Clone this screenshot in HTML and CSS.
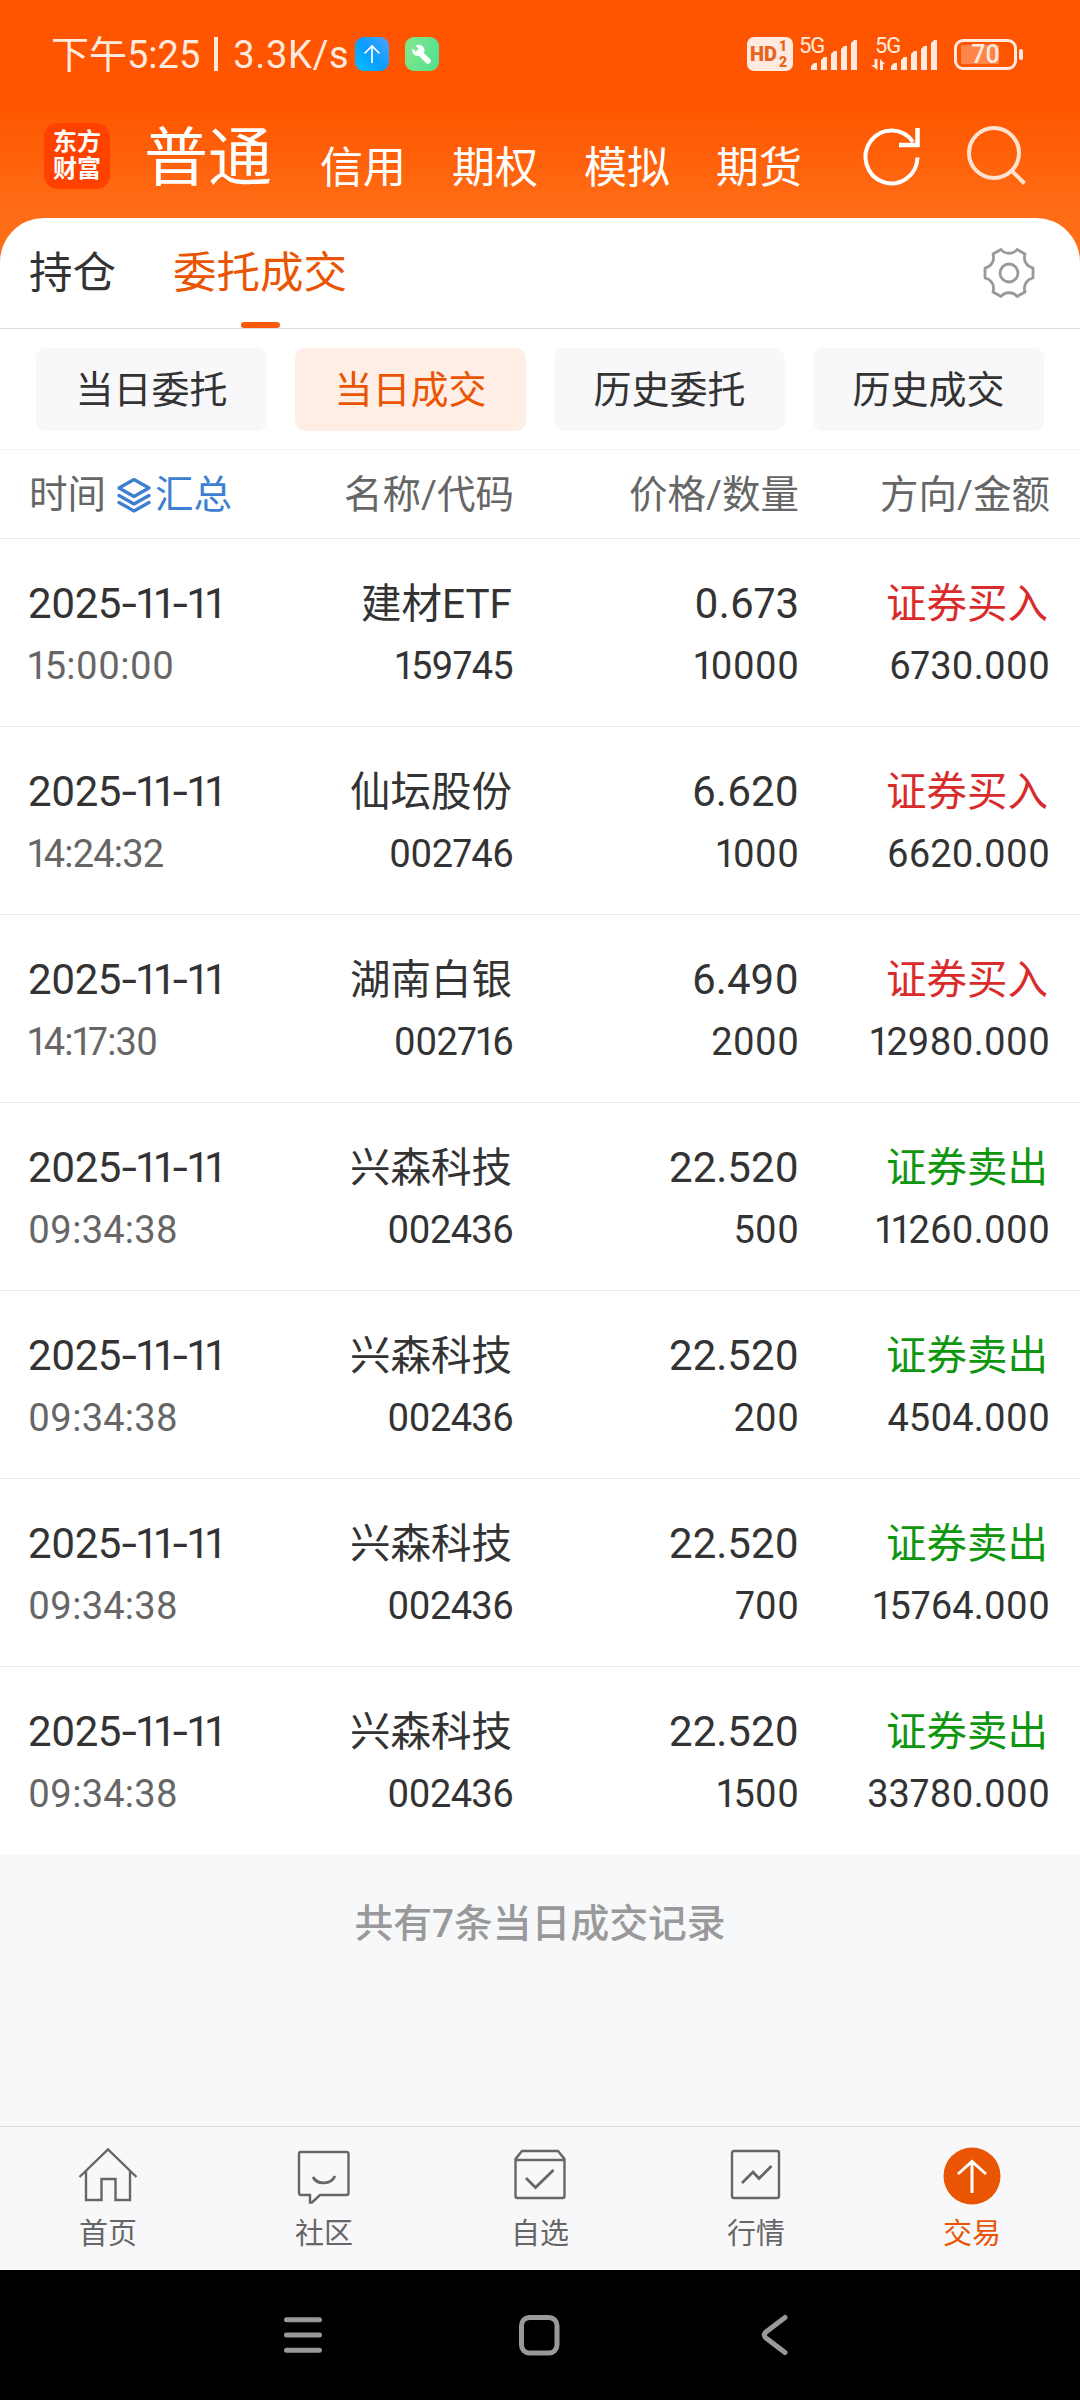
FILE: index.html
```
<!DOCTYPE html>
<html lang="zh-CN">
<head>
    <meta charset="UTF-8">
    <meta name="viewport" content="width=device-width, initial-scale=1.0">
    <title>当日成交</title>
    <link rel="stylesheet" href="styles.css">
</head>
<body>
    <div class="app">
        <div class="top">
            <div class="status-bar">
                <span class="status-time">下午5:25</span>
                <span class="status-divider"></span>
                <span class="status-speed">3.3K/s</span>
                <span class="status-app upload">
                    <svg width="34" height="34" viewBox="0 0 34 34"><path d="M17 26V9M9.500 16.500L17 9l7.500 7.500" fill="none" stroke="#fff" stroke-width="1.700"/></svg>
                </span>
                <span class="status-app tool">
                    <svg width="34" height="34" viewBox="0 0 34 34"><path d="M14 15L23 24" stroke="#fff" stroke-width="5.500" stroke-linecap="round"/><path d="M10.500 8.500l4 4-.500 2-2.500.500-4-3.500c-1.300 4 1.500 7.500 5.500 7.500 4.500 0 7.300-3.500 6.300-7-.800-3.500-5-5.500-8.800-3.500z" fill="#fff"/></svg>
                </span>
                <div class="status-right">
                    <span class="hd">HD<span class="hd-num"><i>1</i><i>2</i></span></span>
                    <span class="signal">
                        <span class="net">5G</span>
                        <svg width="64" height="34" viewBox="0 0 64 34" fill="#ffeadf"><path d="M15 33v-4l3-3h3v7zM25 33V23l3-3h3v13zM35 33V17l3-3h3v19zM45 33V12l3-3h3v24zM55 33V6l3-3h3v30z"/></svg>
                    </span>
                    <span class="signal second">
                        <span class="net">5G</span>
                        <svg width="68" height="34" viewBox="-4 0 68 34" fill="#ffeadf"><path d="M-5 28h3.500v-6h3v11zM4 33V22l5 5H7v6z"/><path d="M15 33v-4l3-3h3v7zM25 33V23l3-3h3v13zM35 33V17l3-3h3v19zM45 33V12l3-3h3v24zM55 33V6l3-3h3v30z"/></svg>
                    </span>
                    <span class="battery">70</span>
                    <span class="battery-cap"></span>
                </div>
            </div>

            <div class="header">
                <div class="logo">东方<br>财富</div>
                <a class="account active">普通</a>
                <a class="account">信用</a>
                <a class="account">期权</a>
                <a class="account">模拟</a>
                <a class="account">期货</a>
                <svg class="refresh" width="60" height="60" viewBox="0 0 60 60" fill="none" stroke="#fff" stroke-width="4"><path d="M55.500 31.500A26 26.500 0 1 1 51 16"/><path d="M55.500 2v17H37" stroke-width="4.500"/></svg>
                <svg class="search" width="60" height="60" viewBox="0 0 60 60" fill="none" stroke="#ffe2d0" stroke-width="4"><circle cx="27" cy="27" r="25"/><path d="M44 44l13.500 13.500"/></svg>
            </div>
        </div>

        <div class="card">
            <div class="tabs">
                <a class="tab">持仓</a>
                <a class="tab active">委托成交</a>
                <svg class="gear" width="52" height="52" viewBox="0 0 52 52" fill="none" stroke="#999" stroke-width="2.800" stroke-linejoin="round"><path d="M18 2.500C22 7.500 30 7.500 34 2.500L42 7C40 13.500 43.500 19.500 50 21V31C43.500 32.500 40 38.500 42 45L34 49.500C30 44.500 22 44.500 18 49.500L10 45C12 38.500 8.500 32.500 2 31V21C8.500 19.500 12 13.500 10 7Z"/><circle cx="26" cy="26" r="9"/></svg>
            </div>

            <div class="filters">
                <a class="filter">当日委托</a>
                <a class="filter active">当日成交</a>
                <a class="filter">历史委托</a>
                <a class="filter">历史成交</a>
            </div>

            <div class="table-head">
                <div class="head-time">时间
                    <span class="summary">
                        <svg width="34" height="36" viewBox="0 0 34 36" fill="none" stroke="#3d7fd0" stroke-width="3.200" stroke-linejoin="round" stroke-linecap="round"><path d="M17 2.500L32 11 17 19.500 2 11zM2 18.500l15 8.500 15-8.500M2 25.500L17 34l15-8.500"/></svg>汇总
                    </span>
                </div>
                <div>名称/代码</div>
                <div>价格/数量</div>
                <div>方向/金额</div>
            </div>

            <div class="row">
                <div class="date">2025<b>-</b>11<b>-</b>11</div><div class="name">建材ETF</div><div>0.673</div><div class="name buy">证券买入</div>
                <div class="sub time">15:00:00</div><div class="sub code">159745</div><div class="sub">10000</div><div class="sub">6730.000</div>
            </div>
            <div class="row">
                <div class="date">2025<b>-</b>11<b>-</b>11</div><div class="name">仙坛股份</div><div>6.620</div><div class="name buy">证券买入</div>
                <div class="sub time tight">14:24:32</div><div class="sub code">002746</div><div class="sub">1000</div><div class="sub">6620.000</div>
            </div>
            <div class="row">
                <div class="date">2025<b>-</b>11<b>-</b>11</div><div class="name">湖南白银</div><div>6.490</div><div class="name buy">证券买入</div>
                <div class="sub time tight">14:17:30</div><div class="sub code">002716</div><div class="sub">2000</div><div class="sub">12980.000</div>
            </div>
            <div class="row">
                <div class="date">2025<b>-</b>11<b>-</b>11</div><div class="name">兴森科技</div><div>22.520</div><div class="name sell">证券卖出</div>
                <div class="sub time">09:34:38</div><div class="sub code">002436</div><div class="sub">500</div><div class="sub">11260.000</div>
            </div>
            <div class="row">
                <div class="date">2025<b>-</b>11<b>-</b>11</div><div class="name">兴森科技</div><div>22.520</div><div class="name sell">证券卖出</div>
                <div class="sub time">09:34:38</div><div class="sub code">002436</div><div class="sub">200</div><div class="sub">4504.000</div>
            </div>
            <div class="row">
                <div class="date">2025<b>-</b>11<b>-</b>11</div><div class="name">兴森科技</div><div>22.520</div><div class="name sell">证券卖出</div>
                <div class="sub time">09:34:38</div><div class="sub code">002436</div><div class="sub">700</div><div class="sub">15764.000</div>
            </div>
            <div class="row">
                <div class="date">2025<b>-</b>11<b>-</b>11</div><div class="name">兴森科技</div><div>22.520</div><div class="name sell">证券卖出</div>
                <div class="sub time">09:34:38</div><div class="sub code">002436</div><div class="sub">1500</div><div class="sub">33780.000</div>
            </div>
        </div>

        <div class="total">共有7条当日成交记录</div>

        <div class="tab-bar">
            <a class="tab-item">
                <svg width="60" height="60" viewBox="0 0 60 60"><path d="M1.500 31L30 3.500 58.500 31M8 25v29h15.500V33h14v21H52V25"/></svg>
                首页
            </a>
            <a class="tab-item">
                <svg width="60" height="60" viewBox="0 0 60 60"><path d="M6.500 6h46q2 0 2 2v39q0 2-2 2H26l-8 7.500h-2V49H7q-2 0-2-2V8q0-2 1.500-2z"/><path d="M19 31c4 8 18 8 22-1" stroke-width="2.800"/></svg>
                社区
            </a>
            <a class="tab-item">
                <svg width="60" height="60" viewBox="0 0 60 60"><path d="M12 5h36l6.500 8v37q0 2-2 2h-45q-2 0-2-2V13zM5.500 14h49"/><path d="M16 32l9.500 9.500L43.500 24" stroke-width="2.800"/></svg>
                自选
            </a>
            <a class="tab-item">
                <svg width="60" height="60" viewBox="0 0 60 60"><rect x="6" y="5" width="47" height="47" rx="2"/><path d="M16 37l11-11 6 6.500L45.500 20" stroke-width="2.800"/></svg>
                行情
            </a>
            <a class="tab-item active">
                <svg width="60" height="60" viewBox="0 0 60 60"><circle cx="30" cy="30" r="28.500"/><path d="M30 47V16M16 28l14-12.500L44 28"/></svg>
                交易
            </a>
        </div>

        <div class="system-nav">
            <svg width="44" height="44" viewBox="0 0 44 44"><path d="M5.500 6.700h33M5.500 22h33M5.500 37.300h33"/></svg>
            <svg width="44" height="44" viewBox="0 0 44 44"><rect x="4.500" y="4.500" width="35.500" height="35.500" rx="8"/></svg>
            <svg width="44" height="44" viewBox="0 0 44 44"><path d="M32 4.500L13 19q-3.500 3 0 6L32 39.500"/></svg>
        </div>
    </div>
</body>
</html>
```
FILE: styles.css
```
* {
    margin: 0;
    padding: 0;
    box-sizing: border-box;
}

body {
    width: 1080px;
    font-family: Roboto, "Noto Sans CJK SC", sans-serif;
    background: #f7f8fa;
    color: #333;
}

svg {
    display: block;
    flex: none;
    overflow: visible;
}

.app {
    height: 2400px;
    display: flex;
    flex-direction: column;
}

.top {
    height: 262px;
    margin-bottom: -44px;
    flex: none;
    background: linear-gradient(#ff5500 105px, #ff6e17 215px);
}

/* status bar */
.status-bar {
    height: 108px;
    padding: 0 57px 0 51px;
    display: flex;
    align-items: center;
    color: #ffeadf;
    line-height: 44px;
}

.status-time,
.status-speed {
    padding-top: 2px;
    font-size: 38px;
}

.status-speed {
    letter-spacing: 0.7px;
}

.status-divider {
    width: 4px;
    height: 34px;
    margin: 0 15px 0 14px;
    background: #ffeadf;
}

.status-app {
    width: 34px;
    height: 34px;
    margin-left: 6px;
    border-radius: 9px;
    background: linear-gradient(50deg, #00bfff, #0a9dff 50%, #4fa5ff);
}

.status-app.tool {
    margin-left: 16px;
    background: linear-gradient(110deg, #85e68a, #4fe093);
}

.status-right {
    margin-left: auto;
    display: flex;
    align-items: center;
}

.hd {
    width: 46px;
    height: 34px;
    padding-left: 3px;
    border-radius: 7px;
    display: flex;
    align-items: center;
    background: #ffeadf;
    color: #e8641c;
    font-size: 20px;
    font-weight: 900;
}

.hd-num {
    margin-left: 2px;
    font-size: 14px;
    line-height: 16px;
}

.hd-num i {
    display: block;
    font-style: normal;
}

.signal {
    position: relative;
    margin-left: 3px;
}

.signal.second {
    margin-left: 12px;
}

.net {
    position: absolute;
    top: -1px;
    left: 3px;
    font-size: 22px;
    line-height: 20px;
    letter-spacing: -1px;
}

.battery {
    width: 63px;
    height: 31px;
    margin-left: 14px;
    border: 3px solid #ffeadf;
    border-radius: 9px;
    background: linear-gradient(90deg, #ff8548 38px, transparent 38px) 4px 3px / 49px 19px no-repeat;
    font-size: 25px;
    font-weight: 500;
    line-height: 26px;
    text-align: center;
}

.battery-cap {
    width: 4px;
    height: 11px;
    margin-left: 2px;
    border-radius: 2px;
    background: #ffeadf;
}

/* account switcher */
.header {
    height: 110px;
    padding-left: 44px;
    display: flex;
    color: #fff;
}

.logo {
    width: 66px;
    height: 66px;
    margin: 15px 34px 0 0;
    padding-top: 6px;
    border-radius: 14px;
    background: #ff4200;
    font-size: 24px;
    font-weight: 700;
    line-height: 27px;
    text-align: center;
}

.account {
    width: 132px;
    padding-top: 28px;
    font-size: 43px;
    line-height: 64px;
}

.account.active {
    width: 176px;
    padding-top: 6px;
    font-size: 64px;
    line-height: 90px;
}

.refresh {
    margin: 18px 0 0 14px;
}

.search {
    margin: 18px 0 0 45px;
}

/* orders card */
.card {
    flex: none;
    border-radius: 44px 44px 0 0;
    background: #fff;
}

.tabs {
    height: 111px;
    padding: 0 45px 0 29px;
    display: flex;
    align-items: center;
    border-bottom: 1px solid #ddd;
    font-size: 43.500px;
}

.tab {
    height: 110px;
    margin-right: 57px;
    display: flex;
    flex-direction: column;
    align-items: center;
    line-height: 111px;
}

.tab.active {
    color: #ea5504;
}

.tab.active::after {
    content: "";
    width: 39px;
    height: 6px;
    margin-top: -7px;
    border-radius: 3px;
    background: #fa5a0a;
}

.gear {
    margin-left: auto;
}

.filters {
    height: 121px;
    padding: 19px 36px 0;
    display: flex;
    gap: 28px;
    border-bottom: 1px solid #f5f5f5;
}

.filter {
    flex: 1;
    height: 83px;
    border-radius: 10px;
    background: #f8f8fa;
    font-size: 38px;
    line-height: 84px;
    text-align: center;
}

.filter.active {
    background: #ffeee6;
    color: #ea5504;
}

.table-head,
.row {
    padding-left: 28px;
    display: grid;
    grid-template-columns: 201px 285px 285px 251px;
    text-align: right;
    white-space: nowrap;
}

.table-head {
    height: 89px;
    border-bottom: 1px solid #ebebeb;
    color: #666;
    font-size: 38.500px;
    line-height: 89px;
}

.head-time {
    display: flex;
    align-items: center;
    padding-left: 1px;
}

.summary {
    margin-left: 11px;
    display: flex;
    align-items: center;
    gap: 4px;
    color: #3d7fd0;
}

.row {
    height: 188px;
    padding-top: 34px;
    grid-template-rows: 62px 62px;
    align-content: start;
    border-bottom: 1px solid #ebebeb;
    font-size: 42px;
    line-height: 62px;
    font-feature-settings: "pnum";
}

.row:last-child {
    border-bottom: none;
}

.name {
    padding-right: 2px;
    font-size: 40.500px;
}

.date,
.time {
    text-align: left;
}

.date {
    letter-spacing: -0.6px;
}

/* wider dash between the date parts */
.date b {
    display: inline-block;
    width: 16px;
    font-weight: 400;
    text-align: center;
    transform: scaleX(1.3);
}

.sub {
    font-size: 38px;
}

.sub.code {
    padding-right: 1px;
    letter-spacing: -0.7px;
}

.time {
    color: #666;
    letter-spacing: 0.2px;
}

.sub.tight {
    letter-spacing: -0.8px;
}

.buy {
    color: #d92b2b;
}

.sell {
    color: #0f960f;
}

.total {
    flex: 1;
    padding-top: 39px;
    color: #999;
    font-size: 38.800px;
    font-weight: 500;
    line-height: 60px;
    text-align: center;
}

/* bottom navigation */
.tab-bar {
    height: 144px;
    flex: none;
    display: flex;
    border-top: 1px solid #ddd;
    background: #f8f8fa;
}

.tab-item {
    flex: 1;
    padding-top: 19px;
    display: flex;
    flex-direction: column;
    align-items: center;
    color: #666;
    font-size: 29px;
    line-height: 56px;
}

.tab-item svg {
    fill: none;
    stroke: #666;
    stroke-width: 2.400;
}

.tab-item.active {
    color: #ea5504;
}

.tab-item.active circle {
    fill: #ea5504;
    stroke: none;
}

.tab-item.active path {
    stroke: #fff;
    stroke-width: 3;
}

.system-nav {
    height: 130px;
    padding-right: 2px;
    flex: none;
    display: flex;
    justify-content: center;
    align-items: center;
    gap: 192px;
    background: #000;
}

.system-nav svg {
    fill: none;
    stroke: #999;
    stroke-width: 5;
    stroke-linecap: round;
}
```
